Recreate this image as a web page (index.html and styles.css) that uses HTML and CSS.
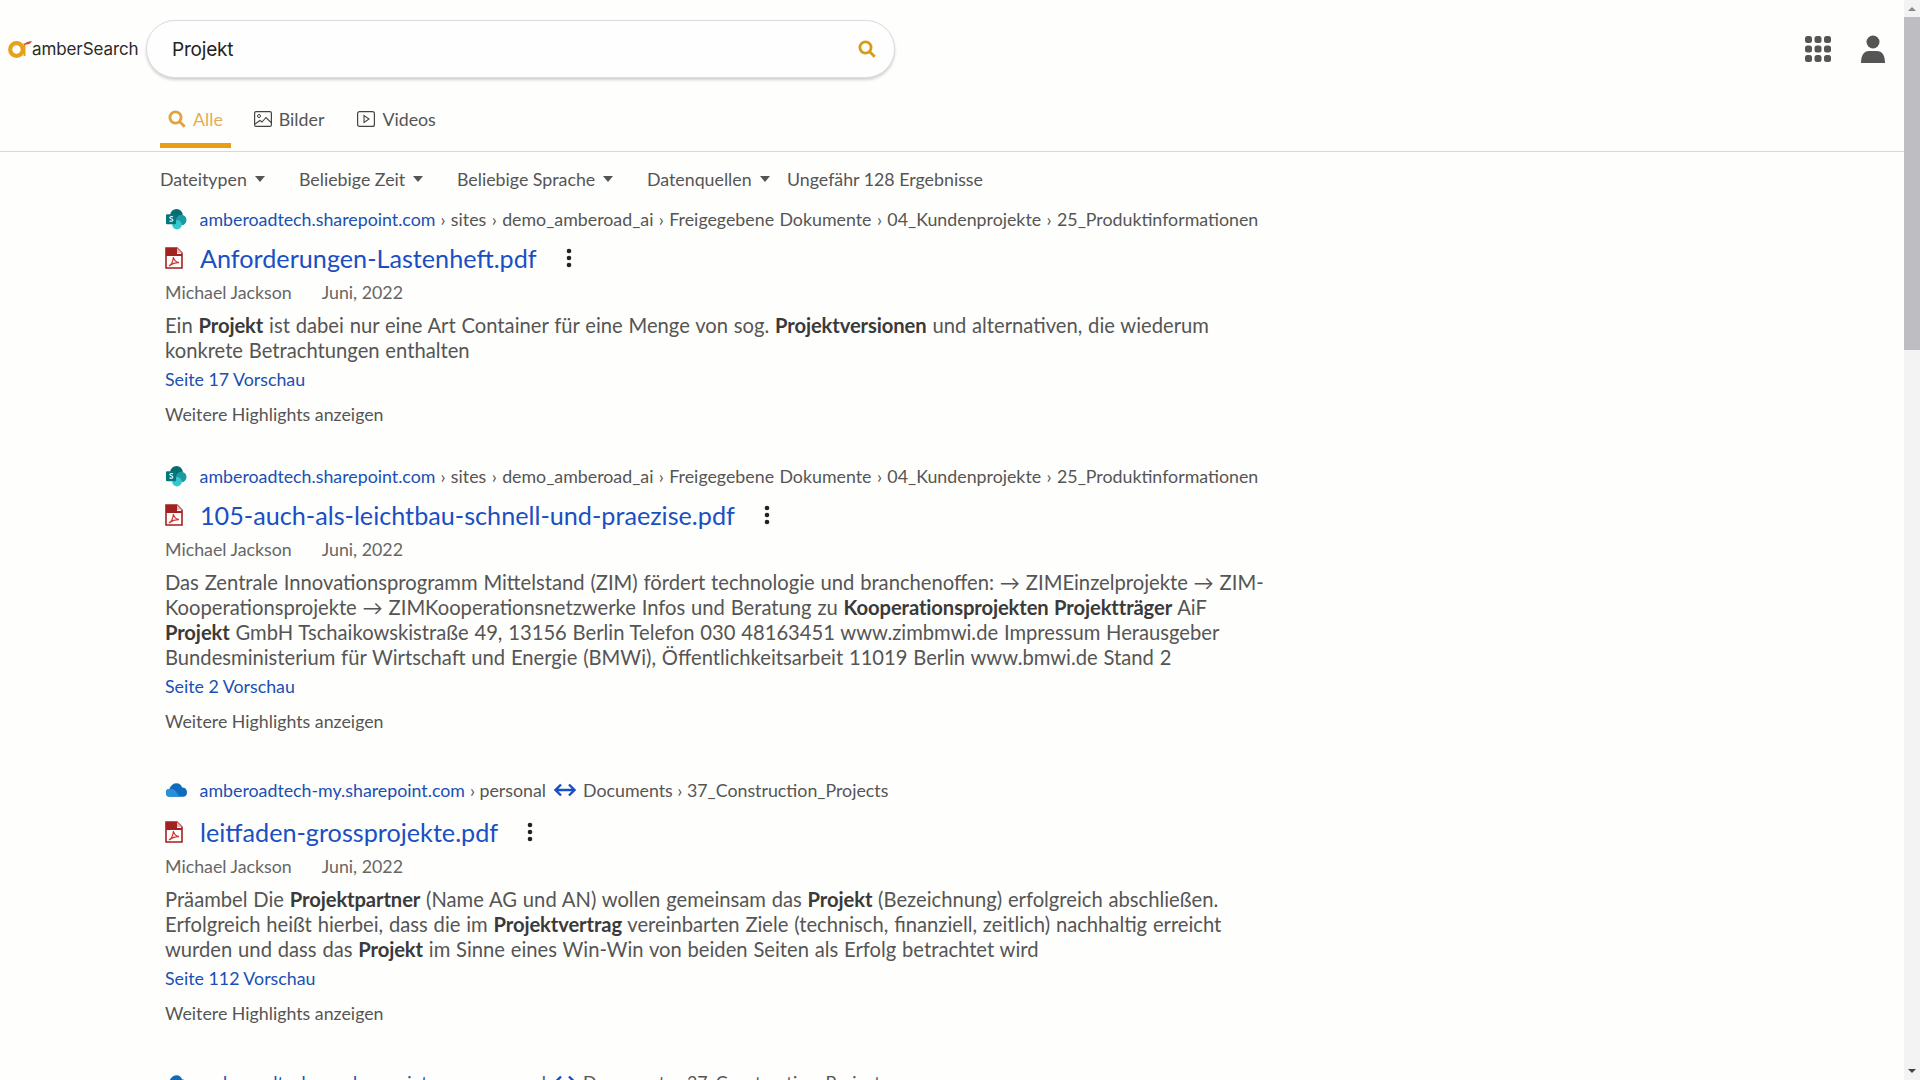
FILE: index.html
```html
<!DOCTYPE html>
<html lang="de">
<head>
<meta charset="utf-8">
<title>amberSearch</title>
<link rel="stylesheet" href="styles.css">
</head>
<body>
<svg class="defs" width="0" height="0" aria-hidden="true">
  <defs>
    <symbol id="pdf" viewBox="0 0 18 22">
      <path d="M1 1h11l5 5v15H1z" fill="#fff" stroke="#a3211f" stroke-width="1.6"/>
      <path d="M1 1h11v6h5v2H1z" fill="#a3211f"/>
      <path d="M12 1l5 5h-5z" fill="#e8b9b8"/>
      <path d="M4 19c2-1 4-5 4.500-9 .5 3 2 5 5.500 5.500-3 0-7 1-10 3.500z" fill="none" stroke="#d4352f" stroke-width="1.300"/>
    </symbol>
    <symbol id="sharepoint" viewBox="0 0 22 22">
      <circle cx="11" cy="6.500" r="6.500" fill="#036c70"/>
      <circle cx="16" cy="11.500" r="5.500" fill="#1a9ba1"/>
      <circle cx="11.500" cy="16.500" r="5" fill="#37c6d0"/>
      <rect x="0" y="5.500" width="10.500" height="10.500" rx="1.200" fill="#03787c"/>
      <path d="M7.300 8.300c-1.600-.8-3.400-.3-3.300.9.100 1.300 3.200 1 3.200 2.500 0 1.300-2 1.500-3.500.7" fill="none" stroke="#fff" stroke-width="1.100"/>
    </symbol>
    <symbol id="dots" viewBox="0 0 6 20">
      <circle cx="3" cy="3" r="2.300"/><circle cx="3" cy="10" r="2.300"/><circle cx="3" cy="17" r="2.300"/>
    </symbol>
    <symbol id="glass" viewBox="0 0 18 18">
      <circle cx="7.500" cy="7.500" r="5.600" fill="none" stroke="currentColor" stroke-width="2.800"/>
      <path d="M11.500 11.500l5.200 5.200" stroke="currentColor" stroke-width="2.800" fill="none"/>
    </symbol>
  </defs>
</svg>

<header class="top">
  <div class="logo">
    <svg class="logo-mark" viewBox="0 0 24 18" aria-hidden="true">
      <circle cx="8.500" cy="9.500" r="6.300" fill="none" stroke="#e3a21a" stroke-width="4.200"/>
      <path d="M15.500 3h2v13h-2z" fill="#e3a21a"/>
      <path d="M16 5c2-3 4-3.500 8-4-1 1.500-2 2.500-3 3-2 .2-3.500.5-5 1z" fill="#d8442a"/>
    </svg>
    <span class="logo-text">amberSearch</span>
  </div>
  <div class="search">
    <span class="search-text">Projekt</span>
    <svg class="search-icon"><use href="#glass"/></svg>
  </div>
  <div class="top-icons">
    <svg class="apps" viewBox="0 0 26 26" aria-hidden="true">
      <rect x="0" y="0" width="7" height="7" rx="2.500"/><rect x="9.500" y="0" width="7" height="7" rx="2.500"/><rect x="19" y="0" width="7" height="7" rx="2.500"/>
      <rect x="0" y="9.500" width="7" height="7" rx="2.500"/><rect x="9.500" y="9.500" width="7" height="7" rx="2.500"/><rect x="19" y="9.500" width="7" height="7" rx="2.500"/>
      <rect x="0" y="19" width="7" height="7" rx="2.500"/><rect x="9.500" y="19" width="7" height="7" rx="2.500"/><rect x="19" y="19" width="7" height="7" rx="2.500"/>
    </svg>
    <svg class="user" viewBox="0 0 24 28" aria-hidden="true">
      <circle cx="12" cy="7" r="6.500"/>
      <path d="M0 28c0-8 3-12 8-12h8c5 0 8 4 8 12z"/>
    </svg>
  </div>
</header>

<nav class="tabs">
  <a class="tab tab-active">
    <svg class="tab-icon"><use href="#glass"/></svg>
    <span>Alle</span>
  </a>
  <a class="tab">
    <svg class="tab-icon" viewBox="0 0 18 16" aria-hidden="true">
      <rect x=".6" y=".6" width="16.800" height="14.800" rx="1.500" fill="none" stroke="currentColor" stroke-width="1.200"/>
      <circle cx="5" cy="5" r="1.500" fill="none" stroke="currentColor"/>
      <path d="M1 13l5-3.500 2 1.500 4-4.500 5 5" fill="none" stroke="currentColor" stroke-width="1.100"/>
    </svg>
    <span>Bilder</span>
  </a>
  <a class="tab">
    <svg class="tab-icon" viewBox="0 0 18 16" aria-hidden="true">
      <rect x=".6" y=".6" width="16.800" height="14.800" rx="2" fill="none" stroke="currentColor" stroke-width="1.200"/>
      <path d="M7 4.500v7l5-3.500z" fill="none" stroke="currentColor" stroke-width="1.100"/>
    </svg>
    <span>Videos</span>
  </a>
</nav>

<div class="filters">
  <span class="filter filter-a">Dateitypen<i class="caret"></i></span>
  <span class="filter filter-b">Beliebige Zeit<i class="caret"></i></span>
  <span class="filter filter-c">Beliebige Sprache<i class="caret"></i></span>
  <span class="filter filter-d">Datenquellen<i class="caret"></i></span>
  <span class="count">Ungefähr 128 Ergebnisse</span>
</div>

<main class="results">
  <article class="result">
    <div class="crumbs">
      <svg class="source"><use href="#sharepoint"/></svg>
      <a class="host">amberoadtech.sharepoint.com</a>
      <span class="path">› sites › demo_amberoad_ai › Freigegebene Dokumente › 04_Kundenprojekte › 25_Produktinformationen</span>
    </div>
    <div class="title-row">
      <svg class="pdf"><use href="#pdf"/></svg>
      <a class="title">Anforderungen-Lastenheft.pdf</a>
      <svg class="dots"><use href="#dots"/></svg>
    </div>
    <div class="meta"><span>Michael Jackson</span><span>Juni, 2022</span></div>
    <p class="snippet">Ein <b>Projekt</b> ist dabei nur eine Art Container für eine Menge von sog. <b>Projektversionen</b> und alternativen, die wiederum konkrete Betrachtungen enthalten</p>
    <a class="preview">Seite 17 Vorschau</a>
    <div class="more">Weitere Highlights anzeigen</div>
  </article>

  <article class="result">
    <div class="crumbs">
      <svg class="source"><use href="#sharepoint"/></svg>
      <a class="host">amberoadtech.sharepoint.com</a>
      <span class="path">› sites › demo_amberoad_ai › Freigegebene Dokumente › 04_Kundenprojekte › 25_Produktinformationen</span>
    </div>
    <div class="title-row">
      <svg class="pdf"><use href="#pdf"/></svg>
      <a class="title">105-auch-als-leichtbau-schnell-und-praezise.pdf</a>
      <svg class="dots"><use href="#dots"/></svg>
    </div>
    <div class="meta"><span>Michael Jackson</span><span>Juni, 2022</span></div>
    <p class="snippet">Das Zentrale Innovationsprogramm Mittelstand (ZIM) fördert technologie und branchenoffen: → ZIMEinzelprojekte → ZIM-Kooperationsprojekte → ZIMKooperationsnetzwerke Infos und Beratung zu <b>Kooperationsprojekten Projektträger</b> AiF <b>Projekt</b> GmbH Tschaikowskistraße 49, 13156 Berlin Telefon 030 48163451 www.zimbmwi.de Impressum Herausgeber Bundesministerium für Wirtschaft und Energie (BMWi), Öffentlichkeitsarbeit 11019 Berlin www.bmwi.de Stand 2</p>
    <a class="preview">Seite 2 Vorschau</a>
    <div class="more">Weitere Highlights anzeigen</div>
  </article>

  <article class="result result-shared">
    <div class="crumbs">
      <svg class="source source-cloud" viewBox="0 0 22 14" aria-hidden="true"><path d="M4 14a4 4 0 0 1-.5-8C5 2 8 0 11 0c3 0 5 2 6 4.500 3 0 5 2 5 5s-2 4.500-4 4.500z" fill="#0f6cbd"/><path d="M4 14a4 4 0 0 1-.5-8C6 5 8 6 10 8l4 6z" fill="#2a8fd8"/></svg>
      <a class="host">amberoadtech-my.sharepoint.com</a>
      <span>› personal</span>
      <svg class="swap" viewBox="0 0 22 14" aria-hidden="true"><path d="M7 1.500L1.500 7 7 12.500M15 1.500L20.500 7 15 12.500M2 7h18" fill="none" stroke="#1a4fc4" stroke-width="2.400"/></svg>
      <span>Documents › 37_Construction_Projects</span>
    </div>
    <div class="title-row">
      <svg class="pdf"><use href="#pdf"/></svg>
      <a class="title">leitfaden-grossprojekte.pdf</a>
      <svg class="dots"><use href="#dots"/></svg>
    </div>
    <div class="meta"><span>Michael Jackson</span><span>Juni, 2022</span></div>
    <p class="snippet">Präambel Die <b>Projektpartner</b> (Name AG und AN) wollen gemeinsam das <b>Projekt</b> (Bezeichnung) erfolgreich abschließen. Erfolgreich heißt hierbei, dass die im <b>Projektvertrag</b> vereinbarten Ziele (technisch, finanziell, zeitlich) nachhaltig erreicht wurden und dass das <b>Projekt</b> im Sinne eines Win-Win von beiden Seiten als Erfolg betrachtet wird</p>
    <a class="preview">Seite 112 Vorschau</a>
    <div class="more">Weitere Highlights anzeigen</div>
  </article>

  <article class="result result-shared">
    <div class="crumbs">
      <svg class="source source-cloud" viewBox="0 0 22 14" aria-hidden="true"><path d="M4 14a4 4 0 0 1-.5-8C5 2 8 0 11 0c3 0 5 2 6 4.500 3 0 5 2 5 5s-2 4.500-4 4.500z" fill="#0f6cbd"/><path d="M4 14a4 4 0 0 1-.5-8C6 5 8 6 10 8l4 6z" fill="#2a8fd8"/></svg>
      <a class="host">amberoadtech-my.sharepoint.com</a>
      <span>› personal</span>
      <svg class="swap" viewBox="0 0 22 14" aria-hidden="true"><path d="M7 1.500L1.500 7 7 12.500M15 1.500L20.500 7 15 12.500M2 7h18" fill="none" stroke="#1a4fc4" stroke-width="2.400"/></svg>
      <span>Documents › 37_Construction_Projects</span>
    </div>
  </article>
</main>

<div class="scrollbar" aria-hidden="true">
  <i class="arrow arrow-up"></i>
  <i class="thumb"></i>
  <i class="arrow arrow-down"></i>
</div>
</body>
</html>
```
FILE: styles.css
```css
html, body { height: 100%; }
body {
  margin: 0;
  height: 1080px;
  overflow: hidden;
  background: #fefefc;
  color: #555;
  font-family: Lato, "Liberation Sans", sans-serif;
  position: relative;
}
.defs { position: absolute; }
a { color: #1a4fb4; text-decoration: none; }

.top {
  display: flex;
  align-items: center;
  height: 58px;
  padding: 20px 0 0 8px;
}
.logo { display: flex; align-items: center; width: 138px; }
.logo-mark { width: 24px; height: 18px; margin-right: 0; flex: none; }
.logo-text {
  font-family: Inter, "Noto Sans", sans-serif;
  font-size: 17px;
  color: #2b2b2b;
  letter-spacing: -0.1px;
  line-height: 20px;
}
.search {
  box-sizing: border-box;
  width: 749px;
  height: 58px;
  border-radius: 29px;
  border: 1px solid #dcdcdc;
  box-shadow: 0 2px 3px rgba(0, 0, 0, 0.18);
  background: #fefefe;
  display: flex;
  align-items: center;
  justify-content: space-between;
  padding: 0 18px 0 25px;
}
.search-text {
  font-family: Inter, "Noto Sans", sans-serif;
  font-size: 19px;
  letter-spacing: -0.2px;
  color: #222;
}
.search-icon { width: 18px; height: 18px; color: #d99a14; }
.top-icons {
  margin-left: auto;
  margin-right: 35px;
  display: flex;
  align-items: center;
  gap: 30px;
  fill: #555;
}
.apps { width: 26px; height: 26px; }
.user { width: 24px; height: 28px; }

.tabs {
  display: flex;
  height: 74px;
  padding-left: 160px;
  border-bottom: 1px solid #d8d8d8;
  box-sizing: border-box;
  align-items: flex-end;
}
.tab {
  display: flex;
  align-items: center;
  gap: 7px;
  color: #555;
  font-size: 17.8px;
  height: 49px;
  padding: 0 10px 9px;
  box-sizing: border-box;
  margin-right: 13px;
  margin-bottom: 3px;
}
.tab-icon { width: 18px; height: 16px; flex: none; color: #444; }
.tab-active {
  color: #e4ad52;
  border-bottom: 5px solid #e89f13;
  padding: 0 8px 4px;
  margin-right: 13px;
}
.tab-active .tab-icon { color: #e2a33b; height: 18px; }

.filters {
  display: flex;
  align-items: center;
  padding-left: 160px;
  margin-top: 1px;
  height: 52px;
  font-size: 17.8px;
  color: #555;
}
.filter { display: inline-flex; align-items: center; }
.filter-a { width: 139px; }
.filter-b { width: 158px; }
.filter-c { width: 190px; }
.filter-d { width: 140px; }
.caret {
  display: inline-block;
  margin-left: 8px;
  border-left: 5px solid transparent;
  border-right: 5px solid transparent;
  border-top: 6px solid #555;
}

.results {
  padding-left: 165px;
  margin-top: 4px;
  width: 1110px;
  box-sizing: content-box;
}
.result { margin-bottom: 41px; }
.result-shared { padding-top: 7px; }
.result-shared .title-row { margin-top: 14px; }
.crumbs {
  display: flex;
  align-items: center;
  height: 20px;
  font-size: 17.8px;
  color: #555;
  white-space: nowrap;
  gap: 5px;
}
.path { word-spacing: 0.9px; }
.source { width: 21px; height: 21px; margin: 0 7.6px 0 1px; flex: none; }
.source-cloud { height: 14px; }
.swap { width: 22px; height: 14px; margin: 0 2.5px; flex: none; }
.host { color: #1a4fb4; }
.title-row {
  display: flex;
  align-items: center;
  height: 36px;
  margin-top: 11px;
}
.pdf { width: 18px; height: 22px; margin-right: 17px; flex: none; }
.title { font-size: 25.2px; color: #1a4fc4; line-height: 36px; }
.dots { width: 6px; height: 20px; margin-left: 29px; fill: #222; }
.meta {
  display: flex;
  gap: 30px;
  font-size: 17.8px;
  line-height: 22px;
  margin-top: 5px;
  color: #666;
}
.snippet {
  margin: 10px 0 0;
  font-size: 20.2px;
  word-spacing: 0.65px;
  line-height: 25px;
  color: #555;
}
.snippet b { color: #3a3a3a; font-weight: 700; letter-spacing: -0.1px; }
.preview {
  display: block;
  font-size: 17.8px;
  line-height: 22px;
  margin-top: 5px;
}
.more {
  font-size: 17.8px;
  line-height: 22px;
  margin-top: 13px;
  color: #555;
}

.scrollbar {
  position: absolute;
  top: 0;
  right: 0;
  bottom: 0;
  width: 16px;
  background: #f3f3f3;
}
.thumb {
  position: absolute;
  top: 17px;
  left: 0;
  width: 100%;
  height: 333px;
  background: #bdbdc2;
}
.arrow {
  position: absolute;
  left: 4px;
  border-left: 4px solid transparent;
  border-right: 4px solid transparent;
}
.arrow-up { top: 7px; border-bottom: 4px solid #888; }
.arrow-down { bottom: 7px; border-top: 4px solid #444; }
```
